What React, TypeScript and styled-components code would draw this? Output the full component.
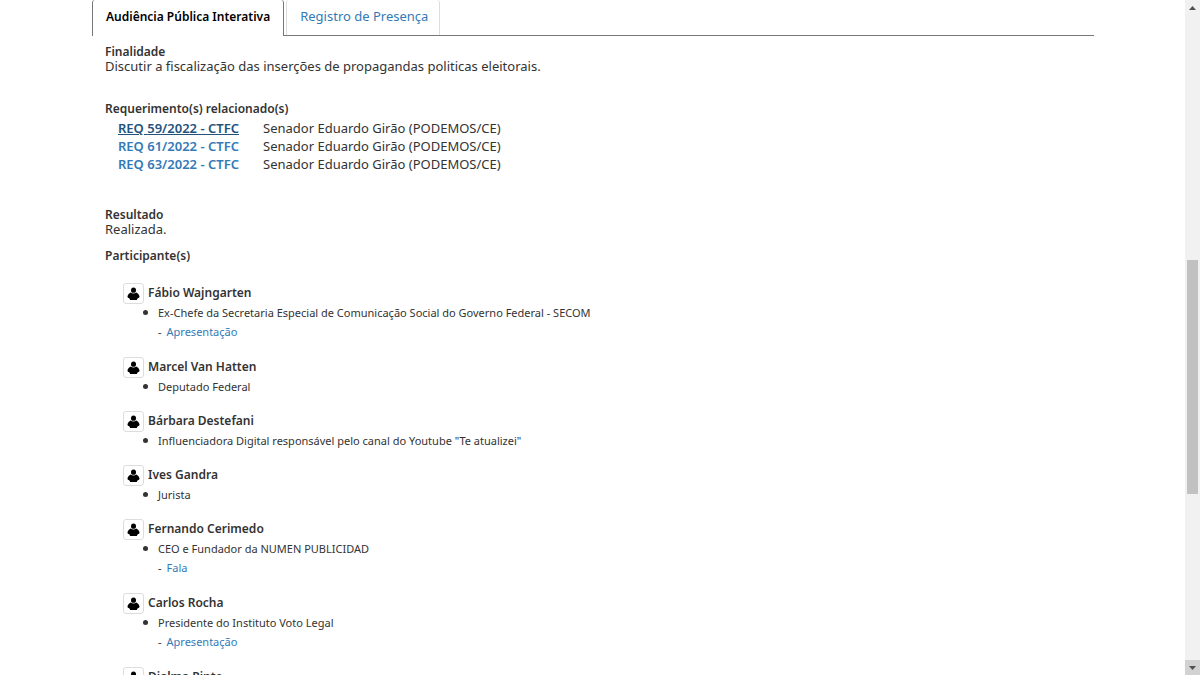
import React from 'react';
import styled, { createGlobalStyle } from 'styled-components';

const GlobalStyle = createGlobalStyle`
  * { box-sizing: border-box; }
  body {
    margin: 0;
    background: #fff;
    color: #333;
    font-family: 'Noto Sans', 'Open Sans', sans-serif;
    font-size: 13px;
    line-height: 15px;
  }
`;

const Link = styled.a<{ $current?: boolean }>`
  color: ${(p) => (p.$current ? '#23527c' : '#337ab7')};
  text-decoration: ${(p) => (p.$current ? 'underline' : 'none')};
  &:hover { color: #23527c; text-decoration: underline; }
`;

const Viewport = styled.div`
  display: flex;
  height: 100vh;
  overflow: hidden;
`;

const Page = styled.main`
  flex: 1;
  min-width: 0;
  padding: 0 91px 0 92px;
`;

const TabBar = styled.nav`
  display: flex;
  gap: 2px;
  height: 36px;
  border-bottom: 1px solid #777;
`;

const Tab = styled.a<{ $active?: boolean }>`
  height: ${(p) => (p.$active ? 36 : 35)}px;
  padding: ${(p) => (p.$active ? '9px 13px 0' : '8px 11px 0 13px')};
  line-height: 16px;
  white-space: nowrap;
  text-decoration: none;
  background: #fff;
  color: ${(p) => (p.$active ? '#000' : '#337ab7')};
  font-size: ${(p) => (p.$active ? 12 : 13)}px;
  font-weight: ${(p) => (p.$active ? 600 : 400)};
  border: 1px solid ${(p) => (p.$active ? '#777' : '#ddd')};
  border-width: 0 1px;
  border-radius: 3px 3px 0 0;
`;

const Panel = styled.div`
  padding: 8px 13px 0;
`;

const Section = styled.section<{ $gap: number }>`
  margin-bottom: ${(p) => p.$gap}px;
`;

const Heading = styled.h2`
  margin: 0;
  font-size: 12px;
  font-weight: 600;
  line-height: 15px;
`;

const Text = styled.p`
  margin: 0;
`;

const Requests = styled.table`
  margin: 3px 0 0 13px;
  border-collapse: collapse;
  line-height: 18px;
  td, th { padding: 0; text-align: left; }
  th { width: 145px; font-weight: 600; }
`;

const People = styled.ul`
  list-style: none;
  margin: 20px 0 0 18px;
  padding: 0;
`;

const Person = styled.li`
  margin-bottom: 15px;
`;

const PersonHead = styled.div`
  display: flex;
  align-items: center;
  gap: 4px;
  height: 20px;
`;

const PersonName = styled.h3`
  margin: 0;
  font-size: 12px;
  font-weight: 600;
  line-height: 20px;
`;

const Avatar = styled.span`
  display: flex;
  align-items: center;
  justify-content: center;
  width: 21px;
  height: 21px;
  margin-top: 1px;
  border: 1px solid #ddd;
  border-radius: 3px;
  flex: none;
`;

const Role = styled.p`
  display: flex;
  align-items: center;
  gap: 10px;
  margin: 0 0 0 20px;
  font-size: 11px;
  line-height: 19px;
  &::before {
    content: '';
    width: 5px;
    height: 5px;
    border-radius: 50%;
    background: #333;
  }
`;

const Attachment = styled.p`
  display: flex;
  gap: 5px;
  margin: 0 0 0 35px;
  font-size: 11px;
  line-height: 20px;
`;

const Scrollbar = styled.div`
  display: flex;
  flex-direction: column;
  width: 15px;
  background: #f1f1f1;
`;

const Arrow = styled.span<{ $shaded?: boolean }>`
  display: flex;
  align-items: center;
  justify-content: center;
  height: 15px;
  background: ${(p) => (p.$shaded ? '#d2d2d2' : '#f1f1f1')};
`;

const Track = styled.div`
  display: grid;
  flex: 1;
  grid-template-rows: 245fr 234fr 166fr;
`;

const Thumb = styled.span`
  grid-row: 2;
  margin: 0 2px;
  background: #c1c1c1;
`;

const PersonIcon = () => (
  <svg width="13" height="14" viewBox="0 0 13 14" aria-hidden="true">
    <ellipse cx="6.5" cy="3.2" rx="2.5" ry="2.600" />
    <path d="M3.800 5.400C2 6 .5 8 .5 9.600c0 1 .7 1.500 1.800 1.600L3.200 13h6.600l.9-1.800c1.100-.1 1.800-.6 1.800-1.600C12.500 8 11 6 9.200 5.400 8.500 6.100 7.600 6.400 6.500 6.400S4.500 6.100 3.800 5.400z" />
  </svg>
);

const requests = ['59', '61', '63'];

const people = [
  { name: 'Fábio Wajngarten', role: 'Ex-Chefe da Secretaria Especial de Comunicação Social do Governo Federal - SECOM', link: 'Apresentação' },
  { name: 'Marcel Van Hatten', role: 'Deputado Federal' },
  { name: 'Bárbara Destefani', role: 'Influenciadora Digital responsável pelo canal do Youtube "Te atualizei"' },
  { name: 'Ives Gandra', role: 'Jurista' },
  { name: 'Fernando Cerimedo', role: 'CEO e Fundador da NUMEN PUBLICIDAD', link: 'Fala' },
  { name: 'Carlos Rocha', role: 'Presidente do Instituto Voto Legal', link: 'Apresentação' },
  { name: 'Djalma Pinto' },
];

export default function App() {
  return (
    <>
      <GlobalStyle />
      <Viewport>
        <Page>
          <TabBar>
            <Tab href="#audiencia" $active aria-current="page">Audiência Pública Interativa</Tab>
            <Tab href="#presenca">Registro de Presença</Tab>
          </TabBar>
          <Panel>
            <Section $gap={27}>
              <Heading>Finalidade</Heading>
              <Text>Discutir a fiscalização das inserções de propagandas politicas eleitorais.</Text>
            </Section>
            <Section $gap={34}>
              <Heading>Requerimento(s) relacionado(s)</Heading>
              <Requests>
                <tbody>
                  {requests.map((n, i) => (
                    <tr key={n}>
                      <th scope="row"><Link href={`#req-${n}`} $current={i === 0}>REQ {n}/2022 - CTFC</Link></th>
                      <td>Senador Eduardo Girão (PODEMOS/CE)</td>
                    </tr>
                  ))}
                </tbody>
              </Requests>
            </Section>
            <Section $gap={11}>
              <Heading>Resultado</Heading>
              <Text>Realizada.</Text>
            </Section>
            <Section $gap={0}>
              <Heading>Participante(s)</Heading>
              <People>
                {people.map((p) => (
                  <Person key={p.name}>
                    <PersonHead>
                      <Avatar><PersonIcon /></Avatar>
                      <PersonName>{p.name}</PersonName>
                    </PersonHead>
                    {p.role && <Role>{p.role}</Role>}
                    {p.link && <Attachment>- <Link href="#anexo">{p.link}</Link></Attachment>}
                  </Person>
                ))}
              </People>
            </Section>
          </Panel>
        </Page>
        <Scrollbar aria-hidden="true">
          <Arrow><svg width="7" height="4"><path d="M0 4L3.500 0L7 4z" fill="#505050" /></svg></Arrow>
          <Track><Thumb /></Track>
          <Arrow $shaded><svg width="7" height="4"><path d="M0 0L3.500 4L7 0z" fill="#505050" /></svg></Arrow>
        </Scrollbar>
      </Viewport>
    </>
  );
}
